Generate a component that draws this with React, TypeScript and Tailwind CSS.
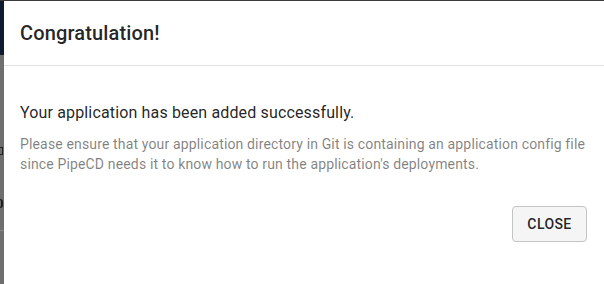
export default function App() {
  return (
    <div
      className="w-[604px] h-[284px] overflow-hidden flex flex-col bg-[#6f6f6f]"
      style={{ fontFamily: 'Roboto, "Liberation Sans", sans-serif' }}
    >
      <div className="h-[1px] bg-[#3b3b3b] shrink-0" />
      <div className="flex flex-1">
        <div className="w-[4px] shrink-0 flex flex-col">
          <div className="h-[54px] bg-[#0f1a31]" />
          <div className="flex-1 bg-[#6f6f6f] relative">
            <div className="absolute left-0 top-[92px] w-[3px] h-[8px] border-r border-y border-[#222]" />
            <div className="absolute left-0 top-[144px] w-[3px] h-[9px] border-r-2 border-y border-[#1e1e1e] rounded-r-sm" />
            <div className="absolute left-0 top-[175px] w-[4px] h-px bg-[#8a8a8a]" />
          </div>
        </div>
        <div className="flex-1 bg-white flex flex-col">
          <div className="h-[64px] px-4 flex items-center">
            <h2 className="text-[20px] leading-[32px] font-medium text-[rgba(0,0,0,0.87)] tracking-[0.15px]">
              Congratulation!
            </h2>
          </div>
          <div className="h-px bg-[#e0e0e0]" />
          <div className="px-4 pt-[35px]">
            <p className="text-[16px] leading-[24px] text-[rgba(0,0,0,0.87)] tracking-[0.15px]">
              Your application has been added successfully.
            </p>
            <p className="mt-[9px] text-[14px] leading-[20px] text-[rgba(0,0,0,0.5)] tracking-[0.15px]">
              Please ensure that your application directory in Git is containing an application config file
              <br />
              since PipeCD needs it to know how to run the application's deployments.
            </p>
          </div>
          <div className="flex justify-end pr-[17px] pt-[32px]">
            <button className="w-[75px] h-[36px] rounded-[4px] border border-[#c4c4c4] bg-[#f5f5f5] text-[14px] font-medium uppercase tracking-[0.4px] text-[rgba(0,0,0,0.87)]">
              Close
            </button>
          </div>
        </div>
      </div>
    </div>
  );
}
